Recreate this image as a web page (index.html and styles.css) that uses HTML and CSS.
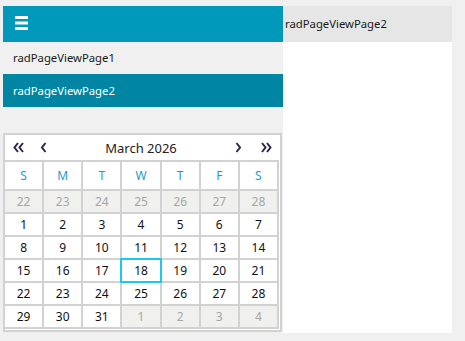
FILE: index.html
```html
<!DOCTYPE html>
<html lang="en">
<head>
 <meta charset="UTF-8">
 <title>radPageView</title>
 <link rel="stylesheet" href="styles.css">
</head>
<body>
 <div class="pageview">
   <div class="strip">
     <div class="strip-head">
       <svg class="burger" width="13" height="14" viewBox="0 0 13 14">
         <rect x="0" y="0" width="13" height="3" fill="#fff"/>
         <rect x="0" y="5.5" width="13" height="3" fill="#fff"/>
         <rect x="0" y="11" width="13" height="3" fill="#fff"/>
       </svg>
     </div>
     <div class="item">radPageViewPage1</div>
     <div class="item selected">radPageViewPage2</div>

     <div class="calendar">
       <div class="cal-head">
         <svg class="fast-prev" width="11" height="11" viewBox="0 0 11 11"><path d="M5 1 L1.5 5.5 L5 10 M10 1 L6.5 5.5 L10 10" fill="none" stroke="#33264d" stroke-width="2"/></svg>
         <svg class="prev" width="7" height="11" viewBox="0 0 7 11"><path d="M5.5 1 L2 5.5 L5.5 10" fill="none" stroke="#33264d" stroke-width="2"/></svg>
         <span class="title">March 2026</span>
         <svg class="next" width="7" height="11" viewBox="0 0 7 11"><path d="M1.5 1 L5 5.5 L1.5 10" fill="none" stroke="#33264d" stroke-width="2"/></svg>
         <svg class="fast-next" width="11" height="11" viewBox="0 0 11 11"><path d="M1 1 L4.5 5.5 L1 10 M6 1 L9.5 5.5 L6 10" fill="none" stroke="#33264d" stroke-width="2"/></svg>
       </div>
       <div class="grid">
         <div class="dn">S</div><div class="dn">M</div><div class="dn">T</div><div class="dn">W</div><div class="dn">T</div><div class="dn">F</div><div class="dn">S</div>
         <div class="d other">22</div><div class="d other">23</div><div class="d other">24</div><div class="d other">25</div><div class="d other">26</div><div class="d other">27</div><div class="d other">28</div>
         <div class="d">1</div><div class="d">2</div><div class="d">3</div><div class="d">4</div><div class="d">5</div><div class="d">6</div><div class="d">7</div>
         <div class="d">8</div><div class="d">9</div><div class="d">10</div><div class="d">11</div><div class="d">12</div><div class="d">13</div><div class="d">14</div>
         <div class="d">15</div><div class="d">16</div><div class="d">17</div><div class="d today">18</div><div class="d">19</div><div class="d">20</div><div class="d">21</div>
         <div class="d">22</div><div class="d">23</div><div class="d">24</div><div class="d">25</div><div class="d">26</div><div class="d">27</div><div class="d">28</div>
         <div class="d">29</div><div class="d">30</div><div class="d">31</div><div class="d other">1</div><div class="d other">2</div><div class="d other">3</div><div class="d other">4</div>
       </div>
     </div>
   </div>

   <div class="content">
     <div class="content-head">radPageViewPage2</div>
     <div class="content-body"></div>
   </div>
 </div>
</body>
</html>
```

FILE: styles.css
```css
body { margin: 6px 0 0 3px; background: #f0f0f0; font-family: "Noto Sans", "Open Sans", sans-serif; font-size: 12px; color: #1a1a1a; }
.pageview { display: flex; height: 327px; width: 449px; }
.strip { width: 280px; display: flex; flex-direction: column; }
.strip-head { height: 36px; background: #0099bc; padding: 10px 0 0 12px; box-sizing: border-box; }
.burger { display: block; }
.item { height: 32px; line-height: 32px; padding-left: 10px; font-size: 11.3px; }
.item.selected { height: 33px; line-height: 33px; background: #0085a3; color: #fff; }

.calendar { margin-top: 26px; width: 279px; border: 2px solid #d2d2d2; box-sizing: border-box; background: #fff; padding: 0 1px 1px 0; }
.cal-head { height: 25px; display: flex; align-items: center; padding: 0 7px 0 8px; font-size: 13px; color: #222; }
.cal-head svg { display: block; flex: none; }
.cal-head .prev { margin-left: 16px; }
.cal-head .next { margin-right: 19px; }
.cal-head .title { flex: 1; text-align: center; }

.grid { display: grid; grid-template-columns: repeat(7, 1fr); grid-template-rows: 27px repeat(6, 21px); gap: 2px; background: #d2d2d2; padding: 2px 2px 2px 0; }
.dn, .d { background: #fff; display: flex; align-items: center; justify-content: center; }
.dn { color: #1c9bcf; }
.d { color: #111; }
.d.other { background: #f0f0ee; color: #a6a6a6; }
.d.today { outline: 2px solid #1fc6f0; position: relative; z-index: 1; }

.content { width: 169px; display: flex; flex-direction: column; }
.content-head { height: 36px; line-height: 36px; background: #e6e6e6; padding-left: 2px; font-size: 11.3px; }
.content-body { flex: 1; background: #fff; }
```
